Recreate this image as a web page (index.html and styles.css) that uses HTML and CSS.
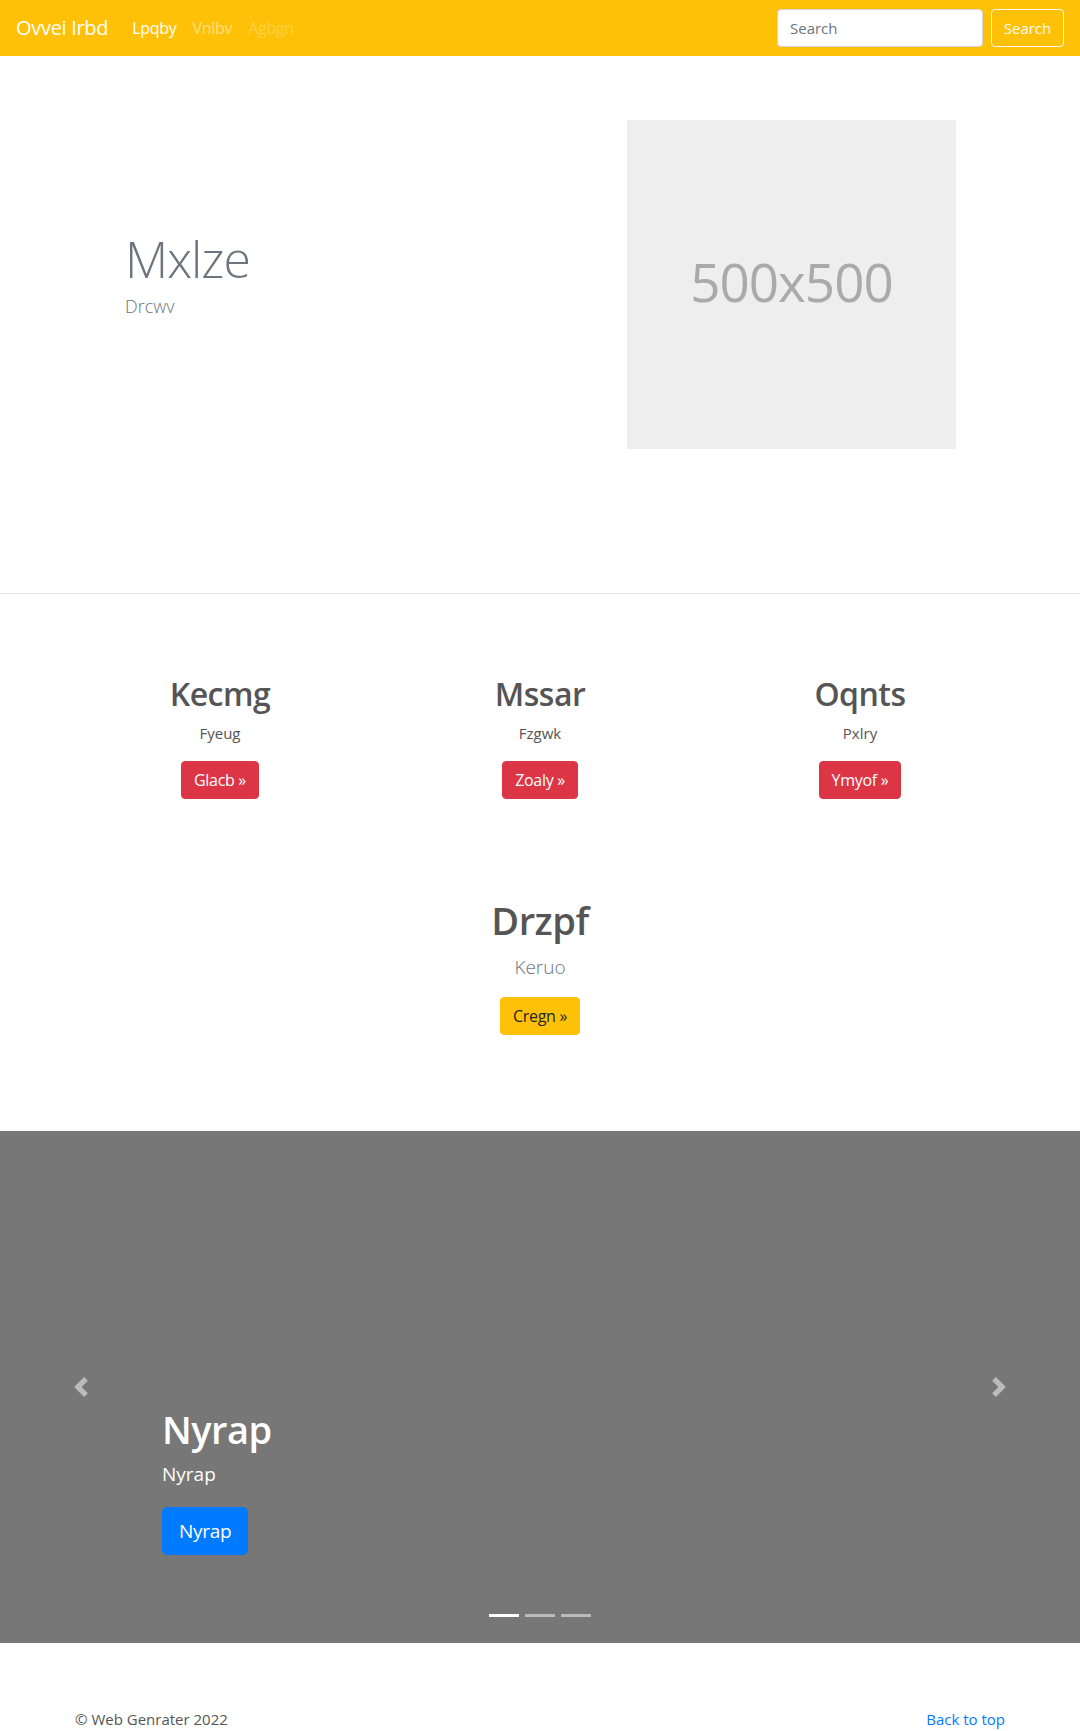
FILE: index.html
```html
<!DOCTYPE html>
<html lang="en">
<head>
<meta charset="utf-8">
<title>Ovvei Irbd</title>
<link rel="stylesheet" href="styles.css">
</head>
<body>
<nav class="navbar">
  <a class="brand" href="#">Ovvei Irbd</a>
  <ul class="nav">
    <li><a class="nav-link active" href="#">Lpqby</a></li>
    <li><a class="nav-link" href="#">Vnlbv</a></li>
    <li><a class="nav-link disabled" href="#">Agbgn</a></li>
  </ul>
  <form class="search">
    <input class="search-input" type="text" placeholder="Search">
    <button class="search-btn" type="button">Search</button>
  </form>
</nav>

<section class="hero">
  <div class="hero-inner">
    <div class="hero-text">
      <h1 class="hero-title">Mxlze</h1>
      <p class="hero-lead">Drcwv</p>
    </div>
    <div class="hero-img">500x500</div>
  </div>
</section>

<section class="features">
  <div class="feature-row">
    <div class="feature">
      <h2 class="feature-title">Kecmg</h2>
      <p class="feature-text">Fyeug</p>
      <a class="btn btn-danger" href="#">Glacb &raquo;</a>
    </div>
    <div class="feature">
      <h2 class="feature-title">Mssar</h2>
      <p class="feature-text">Fzgwk</p>
      <a class="btn btn-danger" href="#">Zoaly &raquo;</a>
    </div>
    <div class="feature">
      <h2 class="feature-title">Oqnts</h2>
      <p class="feature-text">Pxlry</p>
      <a class="btn btn-danger" href="#">Ymyof &raquo;</a>
    </div>
  </div>
  <div class="feature-main">
    <h2 class="main-title">Drzpf</h2>
    <p class="main-lead">Keruo</p>
    <a class="btn btn-warning" href="#">Cregn &raquo;</a>
  </div>
</section>

<section class="carousel">
  <a class="control control-prev" href="#" aria-label="Previous">
    <svg width="20" height="20" viewBox="0 0 8 8"><path fill="#fff" d="M5.25 0l-4 4 4 4 1.5-1.5L4.25 4l2.5-2.5L5.25 0z"/></svg>
  </a>
  <div class="caption">
    <h1 class="caption-title">Nyrap</h1>
    <p class="caption-text">Nyrap</p>
    <a class="btn btn-primary btn-lg" href="#">Nyrap</a>
  </div>
  <a class="control control-next" href="#" aria-label="Next">
    <svg width="20" height="20" viewBox="0 0 8 8"><path fill="#fff" d="M2.75 0l-1.5 1.5L3.75 4l-2.5 2.5L2.75 8l4-4-4-4z"/></svg>
  </a>
  <ol class="indicators">
    <li class="active"></li>
    <li></li>
    <li></li>
  </ol>
</section>

<footer class="footer">
  <p class="copy">&copy; Web Genrater 2022</p>
  <a class="top-link" href="#">Back to top</a>
</footer>
</body>
</html>
```
FILE: styles.css
```css
* { box-sizing: border-box; }
html, body { margin: 0; padding: 0; }
body {
  font-family: "Open Sans", "Noto Sans", sans-serif;
  font-size: 16px;
  line-height: 1.5;
  color: #212529;
  background: #fff;
}
a { text-decoration: none; }
h1, h2, p { margin: 0; }

/* navbar */
.navbar {
  display: flex;
  align-items: center;
  height: 56px;
  padding: 8px 16px;
  background: #ffc107;
}
.brand {
  font-size: 20px;
  line-height: 30px;
  color: #fff;
  margin-right: 16px;
  letter-spacing: -0.3px;
}
.nav {
  display: flex;
  list-style: none;
  margin: 0;
  padding: 0;
  flex: 1;
}
.nav-link {
  display: block;
  padding: 8px 8px;
  font-size: 16px;
  color: rgba(255,255,255,.5);
  letter-spacing: -0.3px;
}
.nav-link.active { color: #fff; }
.nav-link.disabled { color: rgba(255,255,255,.25); }
.search { display: flex; align-items: center; }
.search-input {
  width: 206px;
  height: 38px;
  padding: 6px 12px;
  font: inherit;
  font-size: 15px;
  color: #495057;
  background: #fff;
  border: 1px solid #ced4da;
  border-radius: 4px;
  margin-right: 8px;
}
.search-input::placeholder { color: #6c757d; }
.search-btn {
  height: 38px;
  width: 73px;
  padding: 6px 0;
  font: inherit;
  font-size: 15px;
  color: #f8f9fa;
  background: transparent;
  border: 1px solid #f8f9fa;
  border-radius: 4px;
}

/* hero */
.hero {
  padding: 64px 0 144px;
  border-bottom: 1px solid #e5e5e5;
}
.hero-inner {
  display: flex;
  align-items: center;
  padding-left: 125px;
}
.hero-text {
  flex: 0 0 502px;
  padding-top: 1px;
}
.hero-title {
  font-size: 50px;
  font-weight: 300;
  line-height: 1.2;
  color: #6c757d;
  margin-bottom: 4px;
  letter-spacing: -1px;
}
.hero-lead {
  font-size: 18px;
  font-weight: 300;
  line-height: 1.5;
  color: #6c757d;
  margin-bottom: 22px;
}
.hero-img {
  width: 329px;
  height: 329px;
  padding-bottom: 6px;
  background: #eee;
  color: #aaa;
  display: flex;
  align-items: center;
  justify-content: center;
  font-size: 53px;
  letter-spacing: -1px;
}

/* features */
.features {
  padding: 81px 0 96px;
  text-align: center;
  color: #555;
}
.feature-row {
  width: 960px;
  margin: 0 auto;
  display: grid;
  grid-template-columns: repeat(3, 1fr);
}
.feature-title {
  font-size: 32px;
  font-weight: 600;
  line-height: 1.2;
  margin-bottom: 9px;
  letter-spacing: -0.5px;
}
.feature-text {
  font-size: 15px;
  margin-bottom: 16px;
}
.feature-main { margin-top: 99px; }
.main-title {
  font-size: 38px;
  font-weight: 600;
  line-height: 1.2;
  margin-bottom: 10px;
  letter-spacing: -0.5px;
}
.main-lead {
  font-size: 19px;
  font-weight: 300;
  line-height: 1.5;
  color: #6c757d;
  margin-bottom: 15px;
}

.btn {
  display: inline-block;
  height: 38px;
  padding: 6px 12px;
  font-size: 16px;
  line-height: 24px;
  border-radius: 4px;
  border: 1px solid transparent;
  letter-spacing: -0.3px;
}
.btn-danger { background: #dc3545; border-color: #dc3545; color: #fff; }
.btn-warning { background: #ffc107; border-color: #ffc107; color: #212529; }
.btn-primary { background: #007bff; border-color: #007bff; color: #fff; }
.btn-lg {
  height: 48px;
  padding: 8px 16px;
  font-size: 19px;
  line-height: 30px;
  border-radius: 5px;
}

/* carousel */
.carousel {
  position: relative;
  height: 512px;
  background: #777;
  margin-bottom: 64px;
  display: flex;
  align-items: flex-end;
}
.control {
  flex: 0 0 162px;
  align-self: stretch;
  display: flex;
  align-items: center;
  justify-content: center;
  opacity: .5;
}
.caption {
  flex: 1;
  padding-bottom: 88px;
  color: #fff;
}
.caption-title {
  font-size: 38px;
  font-weight: 600;
  line-height: 1.2;
  margin-bottom: 8px;
  letter-spacing: -0.5px;
}
.caption-text {
  font-size: 19px;
  line-height: 1.5;
  margin-bottom: 18px;
}
.indicators {
  position: absolute;
  left: 0;
  right: 0;
  bottom: 16px;
  margin: 0;
  padding: 0;
  list-style: none;
  display: flex;
  justify-content: center;
}
.indicators li {
  width: 30px;
  height: 23px;
  margin: 0 3px;
  border-top: 10px solid transparent;
  border-bottom: 10px solid transparent;
  background: #fff;
  background-clip: padding-box;
  opacity: .5;
}
.indicators li.active { opacity: 1; }

/* footer */
.footer {
  width: 960px;
  margin: 0 auto;
  padding: 0 15px;
  display: flex;
  justify-content: space-between;
  font-size: 15px;
  line-height: 24px;
}
.copy { color: #555; }
.top-link { color: #007bff; }
```
